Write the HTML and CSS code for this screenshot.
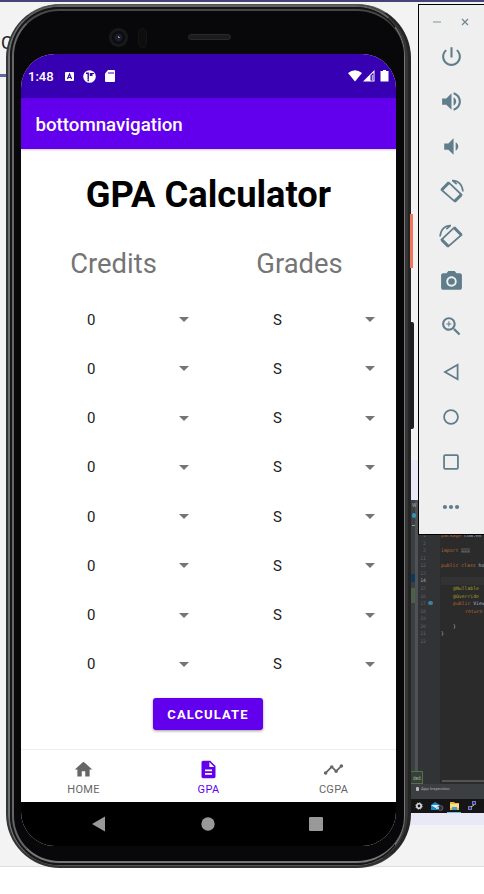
FILE: index.html
```html
<!DOCTYPE html>
<html lang="en">
<head>
<meta charset="utf-8">
<title>GPA Calculator</title>
<link rel="stylesheet" href="styles.css">
</head>
<body>
<main class="desktop">
  <div class="backdrop"><span class="backdrop-text">C</span><i class="tab-line"></i></div>
  <section class="ide">
    <div class="ide-main">
      <div class="ide-side"><span>W</span><i class="ide-dot"></i><b></b></div>
      <div class="ide-gutter"><pre>1
2
3
11
12
13
<em>14</em>
15
16
17
18
19
20
21
22</pre></div>
      <div class="ide-code">
        <div><i class="k">package</i> com.ex</div>
        <div></div>
        <div><i class="k">import</i> <u>...</u></div>
        <div></div>
        <div><i class="k">public class</i> ho</div>
        <div></div>
        <div class="current"></div>
        <div class="in1 a">@Nullable</div>
        <div class="in1 a">@Override</div>
        <div class="in1"><i class="k">public</i> View</div>
        <div class="in2 k">return</div>
        <div></div>
        <div class="in1">}</div>
        <div>}</div>
      </div>
      <span class="ide-toast">ded.</span>
      <i class="ide-scroll"></i>
      <i class="ide-runmark"></i>
    </div>
    <div class="ide-status"><i></i>App Inspection</div>
    <div class="taskbar">
      <svg width="8" height="8" viewBox="0 0 8 8"><circle cx="4" cy="4" r="2.2" fill="none" stroke="#ddd" stroke-width="1.6"/><circle cx="4" cy="4" r="3.2" fill="none" stroke="#ddd" stroke-dasharray="1.2 1.3"/></svg>
      <svg width="14" height="10" viewBox="0 0 14 10"><path d="M1 4L5 1l5 3v5H1z" fill="#1b8ac8"/><path d="M1 4h9L5.500 7z" fill="#d9eefa"/><circle cx="10.500" cy="7" r="2.500" fill="#27313a" stroke="#657"/><path d="M6 6h3v2H6z" fill="#bcd"/></svg>
      <span class="task-active"><svg width="9" height="8" viewBox="0 0 9 8"><path d="M0 0h4l1 1h4v7H0z" fill="#e9b93c"/><path d="M0 2h9v4H0z" fill="#f7df83"/><path d="M2 5h5v3H2z" fill="#4b9dc8"/></svg></span>
      <svg width="9" height="10" viewBox="0 0 9 10"><path d="M4 0h4v4H4zM0 5h4v4H0z" fill="#777cae"/><path d="M5 1h2v2H5zM1 6h2v2H1z" fill="#2929c8"/><path d="M6 4L3 6" stroke="#ddd444"/></svg>
    </div>
  </section>

  <section class="phone">
    <div class="rim rim-a"><div class="rim rim-b"><div class="rim rim-c"><div class="rim rim-d">
      <div class="bezel"><i class="camera"></i><i class="sensor"></i><i class="speaker"></i></div>
      <div class="screen">
        <header class="status">
          <span class="clock">1:48</span>
          <svg class="s1" width="9" height="9" viewBox="0 0 9 9"><rect width="9" height="9" rx="1" fill="#fff"/><path d="M2.400 7L4.500 2l2.100 5M3.200 5.500h2.600" fill="none" stroke="#3700b3" stroke-width="1.200"/></svg>
          <svg class="s2" width="13" height="13" viewBox="0 0 13 13"><circle cx="6.500" cy="6.500" r="6.300" fill="#fff"/><path d="M3 3.200h2.200v6M5.200 9.500v1.700" fill="none" stroke="#3700b3" stroke-width="1.400"/><path d="M6.800 3h2.700v3H6.800z" fill="#3700b3"/><path d="M8.500 3.500h2.500" stroke="#3700b3"/></svg>
          <svg class="s3" width="10" height="12" viewBox="0 0 10 12"><path d="M3 0h6a1 1 0 0 1 1 1v10a1 1 0 0 1-1 1H1a1 1 0 0 1-1-1V3.500z" fill="#fff"/><path d="M4 2v2M6 2v2M8 2v2" stroke="#3700b3"/></svg>
          <svg class="signals" width="42" height="12" viewBox="0 0 42 12"><path d="M0 3Q7-2.500 14 3L7 11.500z" fill="#fff"/><path d="M15 11.500L26.500 0v11.500z" fill="#fff"/><path d="M22.500 5.500L25.500 2.500v8h-3z" fill="#3700b3"/><path d="M24.300 5v5" stroke="#fff" stroke-width=".8"/><path d="M35 0h3v1h2.500v10.500h-8V1H35z" fill="#fff"/></svg>
        </header>
        <div class="appbar">bottomnavigation</div>
        <div class="content">
          <h1>GPA Calculator</h1>
          <div class="heads"><h2>Credits</h2><h2>Grades</h2></div>
          <div class="rows">
            <div class="row"><span class="spin">0</span><span class="spin">S</span></div>
            <div class="row"><span class="spin">0</span><span class="spin">S</span></div>
            <div class="row"><span class="spin">0</span><span class="spin">S</span></div>
            <div class="row"><span class="spin">0</span><span class="spin">S</span></div>
            <div class="row"><span class="spin">0</span><span class="spin">S</span></div>
            <div class="row"><span class="spin">0</span><span class="spin">S</span></div>
            <div class="row"><span class="spin">0</span><span class="spin">S</span></div>
            <div class="row"><span class="spin">0</span><span class="spin">S</span></div>
          </div>
          <button class="calc">CALCULATE</button>
        </div>
        <nav class="tabs">
          <div class="tab"><svg viewBox="0 0 24 24"><path d="M10 20v-6h4v6h5v-8h3L12 3 2 12h3v8z"/></svg><span>HOME</span></div>
          <div class="tab on"><svg viewBox="0 0 24 24"><path d="M14 2H6c-1.100 0-2 .9-2 2v16c0 1.100.9 2 2 2h12c1.100 0 2-.9 2-2V8zm2 16H8v-2h8zm0-4H8v-2h8zm-3-5V3.500L18.500 9z"/></svg><span>GPA</span></div>
          <div class="tab"><svg viewBox="0 0 24 24"><path d="M23 8c0 1.100-.9 2-2 2-.18 0-.35-.02-.51-.07l-3.560 3.550c.05.160.070.340.070.520 0 1.100-.9 2-2 2s-2-.9-2-2c0-.18.020-.36.070-.52l-2.550-2.550c-.16.050-.34.070-.52.070s-.36-.02-.52-.07l-4.550 4.560c.05.160.070.330.070.510 0 1.100-.9 2-2 2s-2-.9-2-2 .9-2 2-2c.18 0 .35.020.51.070l4.560-4.550C8.020 9.360 8 9.180 8 9c0-1.100.9-2 2-2s2 .9 2 2c0 .18-.02.360-.07.520l2.550 2.550c.16-.05.340-.07.520-.07s.36.020.52.070l3.550-3.560C19.020 8.350 19 8.180 19 8c0-1.100.9-2 2-2s2 .9 2 2z"/></svg><span>CGPA</span></div>
        </nav>
        <footer class="sysnav">
          <svg width="15" height="16" viewBox="0 0 15 16"><path d="M14 .5v15L1 8z"/></svg>
          <svg width="14" height="14" viewBox="0 0 14 14"><circle cx="7" cy="7" r="6.700"/></svg>
          <svg width="14" height="14" viewBox="0 0 14 14"><rect width="14" height="14" rx="1"/></svg>
        </footer>
      </div>
    </div></div></div></div>
    <i class="key key-power"></i><i class="key key-volume"></i>
  </section>

  <aside class="tools">
    <div class="win"><svg viewBox="0 0 8 8"><path d="M0 4h8" stroke="#9fb2bb" stroke-width="1.500"/></svg><svg viewBox="0 0 8 8"><path d="M1 1l6 6M7 1L1 7" stroke="#6f8994" stroke-width="1.300"/></svg></div>
    <div class="tool"><svg viewBox="0 0 24 24"><path d="M13 3h-2v10h2zm4.830 2.170l-1.420 1.420C17.990 7.860 19 9.810 19 12c0 3.870-3.130 7-7 7s-7-3.130-7-7c0-2.190 1.010-4.140 2.580-5.420L6.170 5.170C4.230 6.820 3 9.260 3 12c0 4.970 4.030 9 9 9s9-4.030 9-9c0-2.740-1.230-5.180-3.170-6.830z"/></svg></div>
    <div class="tool"><svg viewBox="0 0 24 24"><path d="M3 9v6h4l5 5V4L7 9zm13.500 3c0-1.770-1.020-3.290-2.500-4.030v8.050c1.480-.73 2.500-2.250 2.500-4.020zM14 3.230v2.060c2.890.860 5 3.540 5 6.710s-2.110 5.850-5 6.710v2.060c4.010-.91 7-4.490 7-8.770s-2.990-7.860-7-8.770z"/></svg></div>
    <div class="tool"><svg viewBox="0 0 24 24"><path d="M18.500 12c0-1.770-1.020-3.290-2.500-4.030v8.050c1.480-.73 2.500-2.250 2.500-4.020zM5 9v6h4l5 5V4L9 9z"/></svg></div>
    <div class="tool"><svg viewBox="0 0 24 24"><g fill="none" stroke="#607d8b"><path d="M9.500 3.500L2.500 10.500l12.500 11L21.500 15z" stroke-width="1.700"/><path d="M9.500 3.500L2.500 10.500M15 21.500l6.500-6.500" stroke-width="2.800"/><path d="M12.500 1.500C18.500 1.200 22.500 5.500 23 12M13 1.500l4 3.500" stroke-width="1.500"/></g></svg></div>
    <div class="tool"><svg class="flip" viewBox="0 0 24 24"><g fill="none" stroke="#607d8b"><path d="M9.500 3.500L2.500 10.500l12.500 11L21.500 15z" stroke-width="1.700"/><path d="M9.500 3.500L2.500 10.500M15 21.500l6.500-6.500" stroke-width="2.800"/><path d="M12.500 1.500C18.500 1.200 22.500 5.500 23 12M13 1.500l4 3.500" stroke-width="1.500"/></g></svg></div>
    <div class="tool"><svg viewBox="0 0 24 24"><circle cx="12" cy="12" r="3.200"/><path d="M9 2L7.170 4H4c-1.100 0-2 .9-2 2v12c0 1.100.9 2 2 2h16c1.100 0 2-.9 2-2V6c0-1.100-.9-2-2-2h-3.170L15 2zm3 15c-2.760 0-5-2.240-5-5s2.240-5 5-5 5 2.240 5 5-2.240 5-5 5z"/></svg></div>
    <div class="tool"><svg viewBox="0 0 24 24"><path d="M15.500 14h-.79l-.28-.27C15.410 12.590 16 11.110 16 9.500 16 5.910 13.090 3 9.500 3S3 5.910 3 9.500 5.910 16 9.500 16c1.610 0 3.090-.59 4.230-1.570l.27.280v.79l5 4.990L20.490 19zm-6 0C7.010 14 5 11.990 5 9.500S7.010 5 9.500 5 14 7.010 14 9.500 11.990 14 9.500 14zm2.500-4h-2v2H9v-2H7V9h2V7h1v2h2z"/></svg></div>
    <div class="tool"><svg class="line" viewBox="0 0 20 20"><path d="M16 3.500v13L4.500 10z"/></svg></div>
    <div class="tool"><svg class="line" viewBox="0 0 20 20"><circle cx="10" cy="10" r="6.300"/></svg></div>
    <div class="tool"><svg class="line" viewBox="0 0 20 20"><rect x="3.700" y="3.700" width="12.600" height="12.600" rx="1"/></svg></div>
    <div class="tool"><svg class="dots" viewBox="0 0 20 20"><circle cx="4.500" cy="10" r="1.900"/><circle cx="10" cy="10" r="1.900"/><circle cx="15.500" cy="10" r="1.900"/></svg></div>
  </aside>
</main>
</body>
</html>
```
FILE: styles.css
```css
* { box-sizing: border-box; }
body { margin: 0; background: #fff; font-family: Roboto, "Liberation Sans", sans-serif; }
i, em { font-style: normal; }
.desktop { position: relative; width: 484px; height: 894px; overflow: hidden; }
.backdrop { height: 867px; padding-top: 30px; background: #f3f3f3; border-top: 2px solid #464377; border-bottom: 1px solid #ddd; }
.backdrop-text { display: block; height: 42px; padding-left: 1px; font-size: 18px; line-height: 22px; color: #222; }
.tab-line { display: block; width: 8px; height: 3px; background: #6264a7; }

/* editor window behind the emulator */
.ide { position: absolute; left: 400px; top: 460px; width: 84px; height: 365px; padding-top: 40px; background: #e8e8f6; }
.ide-main { position: relative; display: flex; height: 284px; background: #2b2b2b; overflow: hidden; }
.ide-side { width: 18px; padding-left: 12px; border-right: 3px solid #4e5254; background: linear-gradient(#3c3f41 74px, #0d3a5c 74px 82px, #3c3f41 82px 88px, #4b5f4b 88px 103px, #3c3f41 103px); font-size: 5px; line-height: 10px; color: #aaa; }
.ide-side span, .ide-side b { display: block; }
.ide-dot { display: block; width: 4px; height: 5px; margin-top: 3px; border-radius: 2px; background: #3592b4; }
.ide-side b { width: 3px; height: 1px; margin-top: 7px; background: #999; }
.ide-gutter { width: 22px; padding: 32px 14px 0 0; background: #313335; color: #606366; text-align: right; }
.ide-gutter em { color: #a4a3a3; }
.ide-gutter pre { margin: 0; font: 4.800px/7.570px "DejaVu Sans Mono", monospace; }
.ide-code { flex: 1; min-width: 0; padding: 32px 0 0 1px; font: 4.800px/7.570px "DejaVu Sans Mono", monospace; color: #a9b7c6; white-space: nowrap; }
.ide-code div { height: 7.570px; }
.ide-code .in1 { padding-left: 12px; }
.ide-code .in2 { padding-left: 24px; }
.ide-code .k { color: #b8672f; }
.ide-code .a { color: #a39d28; }
.ide-code u { background: #444; text-decoration: none; }
.ide-code .current { background: #323232; }
.ide-toast { position: absolute; left: 0; bottom: 0; width: 23px; height: 13px; padding: 4px 0 0 12px; border: 1px solid #53704a; background: #344134; font-size: 4.500px; line-height: 6px; color: #aaa; }
.ide-scroll { position: absolute; left: 42px; bottom: 2px; width: 42px; height: 2px; background: #535353; }
.ide-runmark { position: absolute; left: 28px; top: 101px; width: 5px; height: 4px; border-radius: 2px; background: #3b82a0; }
.ide-status { display: flex; align-items: center; gap: 2px; height: 15px; padding: 0 0 6px 16px; background: #3c3f41; font-size: 4.300px; color: #aaa; white-space: nowrap; }
.ide-status i { width: 3px; height: 4px; border-radius: 1px; background: #bbb; }
.taskbar { display: flex; align-items: center; height: 14px; padding-left: 15px; gap: 6.500px; background: #151515; }
.task-active { display: flex; align-items: center; justify-content: center; width: 14px; height: 14px; margin-left: -3px; border-bottom: 1px solid #76b9ed; }
.taskbar svg { flex: none; }

/* phone frame */
.phone { position: absolute; left: 6px; top: 4px; width: 405px; height: 864px; }
.key { position: absolute; }
.key-power { left: 404px; top: 210px; width: 3px; height: 54px; background: #ed765b; }
.key-volume { left: 404px; top: 318px; width: 4px; height: 107px; border-radius: 0 2px 2px 0; background: #1d1f20; }
.rim { position: relative; height: 100%; border-style: solid; }
.rim-a { border-width: 1px 3px 2px 2px; border-color: #555 #252525 #333 #333638; border-radius: 54px; background: #111; }
.rim-b { border-width: 2px 3px 1px 2px; border-color: #606060 #353535 #555 #6d7072; border-radius: 52px; }
.rim-c { border-width: 2px 1px 2px 2px; border-color: #151515 #777 #151515 #171717; border-radius: 49px; }
.rim-d { border-width: 2px 0 2px 2px; border-color: #484848 #222 #777 #666; border-radius: 47px; padding-left: 7px; background: #08080a; }
.bezel { height: 43px; }
.camera { position: absolute; left: 95px; top: 17px; width: 19px; height: 19px; border-radius: 50%; background: radial-gradient(circle, #889 0 1px, #1b1e2b 1px 3px, #0b0b10 5px 6px, #191919 7px); }
.sensor { position: absolute; left: 124px; top: 17px; width: 9px; height: 20px; border: 1px solid #141414; border-radius: 5px; background: #0d0d0d; }
.speaker { position: absolute; left: 174px; top: 23px; width: 43px; height: 6px; border-radius: 3px; border: 1px solid #292929; background: #1b1b1b; }
.screen { width: 375px; height: 792px; overflow: hidden; border-radius: 34px; background: #fff; display: flex; flex-direction: column; }
.status { display: flex; align-items: center; height: 44px; padding: 0 6px 0 7px; background: #3700b3; color: #fff; }
.clock { width: 37px; font-size: 13px; font-weight: 500; line-height: 15px; }
.s2 { margin-left: 9px; }
.s3 { margin-left: 9px; }
.signals { margin-left: auto; }
.appbar { position: relative; height: 51px; padding-left: 14.500px; background: #6200ee; color: #fff; font-size: 18.700px; font-weight: 500; line-height: 54px; box-shadow: 0 1px 2px #0003; }
.content { height: 600px; display: flex; flex-direction: column; align-items: center; }
h1 { margin: 22px 0 0; font-size: 36.300px; line-height: 47px; font-weight: 700; color: #000; }
.heads { display: flex; width: 100%; margin-top: 28px; }
h2 { flex: 0 0 185px; margin: 0; font-size: 27.400px; line-height: 36px; font-weight: 400; text-align: center; color: #757575; }
h2 + h2 { flex-basis: 187px; }
.rows { width: 100%; margin-top: 13px; }
.row { display: flex; height: 49.250px; }
.spin { display: flex; align-items: center; justify-content: space-between; width: 186px; padding: 0 18px 0 66px; font-size: 15px; color: #222; }
.spin::after { content: ""; border: 5px solid transparent; border-top-color: #757575; border-bottom: 0; }
.calc { width: 110px; height: 32px; margin: 9px 1px 0 0; padding: 0; border: 0; border-radius: 3px; background: #6200ee; color: #fff; font: 700 13px/33px Roboto, sans-serif; letter-spacing: 1.100px; box-shadow: 0 1px 3px #0006; }
.tabs { display: flex; height: 53px; border-top: 1px solid #eee; background: #fff; }
.tab { flex: 1; display: flex; flex-direction: column; align-items: center; padding-top: 9px; color: #666; font-size: 11px; line-height: 13px; letter-spacing: .3px; }
.tab svg { width: 21px; height: 21px; margin-bottom: 3px; fill: currentColor; }
.tab.on { color: #6200ee; }
.sysnav { display: flex; align-items: center; justify-content: space-between; height: 44px; padding: 0 73px 0 70px; background: #000; fill: #999; }

/* emulator controls */
.tools { position: absolute; left: 418px; top: 4px; width: 68px; height: 531px; border: 1px solid #000; background: #efefef; fill: #607d8b; }
.win { display: flex; gap: 20px; height: 29px; padding: 13px 0 0 14px; }
.win svg { width: 8px; height: 8px; }
.tool { display: flex; align-items: center; height: 45px; padding-left: 19.500px; }
.tool svg { width: 25px; height: 25px; }
.flip { transform: scaleX(-1); }
.tool .line, .tool .dots { width: 22px; height: 22px; margin-left: 1.500px; }
.tool .line { fill: none; stroke: #607d8b; stroke-width: 1.600; }
```
